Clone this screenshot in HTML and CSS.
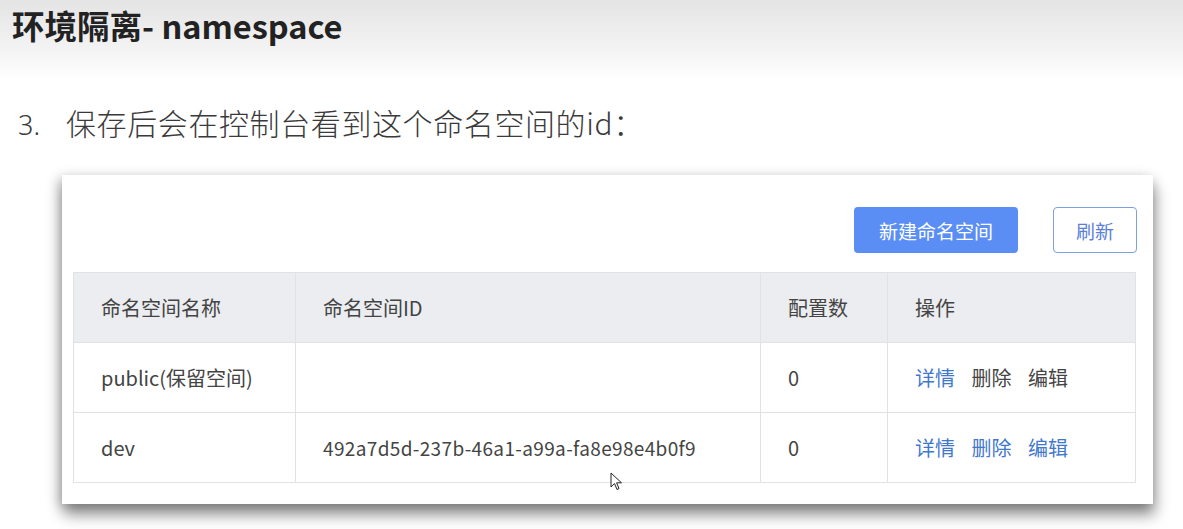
FILE: index.html
```html
<!DOCTYPE html>
<html>
<head>
  <title>环境隔离 - namespace</title>
  <link rel="stylesheet" href="styles.css">
</head>
<body>
  <div class="slide-header">
    <h1>环境隔离- namespace</h1>
  </div>

  <div class="step">
    <span class="step-num">3.</span>
    <span class="step-text">保存后会在控制台看到这个命名空间的id：</span>
  </div>

  <div class="card">
    <div class="toolbar">
      <button class="btn btn-primary">新建命名空间</button>
      <button class="btn btn-plain">刷新</button>
    </div>

    <table class="ns-table">
      <tr>
        <th class="col-name">命名空间名称</th>
        <th class="col-id">命名空间ID</th>
        <th class="col-count">配置数</th>
        <th>操作</th>
      </tr>
      <tr>
        <td>public(保留空间)</td>
        <td></td>
        <td>0</td>
        <td class="actions">
          <a class="link">详情</a>
          <a class="link muted">删除</a>
          <a class="link muted">编辑</a>
        </td>
      </tr>
      <tr>
        <td>dev</td>
        <td class="ns-id">492a7d5d-237b-46a1-a99a-fa8e98e4b0f9</td>
        <td>0</td>
        <td class="actions">
          <a class="link">详情</a>
          <a class="link">删除</a>
          <a class="link">编辑</a>
        </td>
      </tr>
    </table>

    <!-- mouse pointer from the screen capture -->
    <svg class="pointer" width="14" height="20" viewBox="0 0 14 20">
      <path d="M1 1 L1 15 L4.5 11.5 L7 17.5 L9 16.6 L6.6 10.8 L11.5 10.8 Z" fill="#fff" stroke="#222" stroke-width="1"/>
    </svg>
  </div>
</body>
</html>
```

FILE: styles.css
```css
body {
  margin: 0;
  min-height: 529px;
  background: #fff;
  font-family: "Noto Sans CJK SC", "Noto Sans", sans-serif;
  color: #333;
}

.slide-header {
  height: 80px;
  background: linear-gradient(180deg, #e4e4e4 0%, #f3f3f3 60%, #ffffff 100%);
  padding: 0 12px;
}

.slide-header h1 {
  margin: 0;
  padding-top: 2px;
  font-size: 32.5px;
  font-weight: bold;
  color: #222;
  line-height: 46px;
}

.step {
  display: flex;
  align-items: baseline;
  height: 50px;
  margin-top: 20px;
  font-size: 30px;
  color: #3a3a3a;
  font-weight: 300;
}

.step-num {
  font-family: "Noto Sans", sans-serif;
  font-size: 27px;
  width: 48px;
  padding-left: 18px;
}

.step-text {
  letter-spacing: 0.6px;
}

.card {
  position: relative;
  margin: 25px 0 26px 62px;
  width: 1063px;
  padding: 32px 17px 21px 11px;
  background: #fff;
  box-shadow: 2px 11px 14px rgba(0, 0, 0, 0.4), -3px 3px 12px rgba(0, 0, 0, 0.25);
}

.toolbar {
  display: flex;
  justify-content: flex-end;
  gap: 35px;
  margin-right: -1px;
  margin-bottom: 19px;
}

.btn {
  height: 46px;
  font-family: "Noto Sans CJK SC", sans-serif;
  font-size: 19px;
  border-radius: 4px;
  cursor: pointer;
}

.btn-primary {
  width: 164px;
  background: #5b8ef5;
  color: #fff;
  border: none;
}

.btn-plain {
  width: 84px;
  background: #fff;
  color: #5b7fd8;
  border: 1px solid #7ea0e0;
}

.ns-table {
  border-collapse: collapse;
  width: 1063px;
  font-size: 20px;
}

.ns-table th,
.ns-table td {
  height: 69px;
  padding: 0 0 0 27px;
  border: 1px solid #e0e2e6;
  text-align: left;
  font-weight: normal;
  color: #444;
}

.ns-table th {
  background: #ebedf0;
}

.col-name {
  width: 194px;
}

.col-id {
  width: 437px;
}

.col-count {
  width: 99px;
}

.ns-id {
  font-size: 19px;
  letter-spacing: 0.35px;
}

.actions {
  white-space: nowrap;
}

.link {
  color: #3f78cc;
  margin-right: 12px;
  cursor: pointer;
}

.link.muted {
  color: #444;
}

.pointer {
  position: absolute;
  left: 548px;
  top: 297px;
}
```
